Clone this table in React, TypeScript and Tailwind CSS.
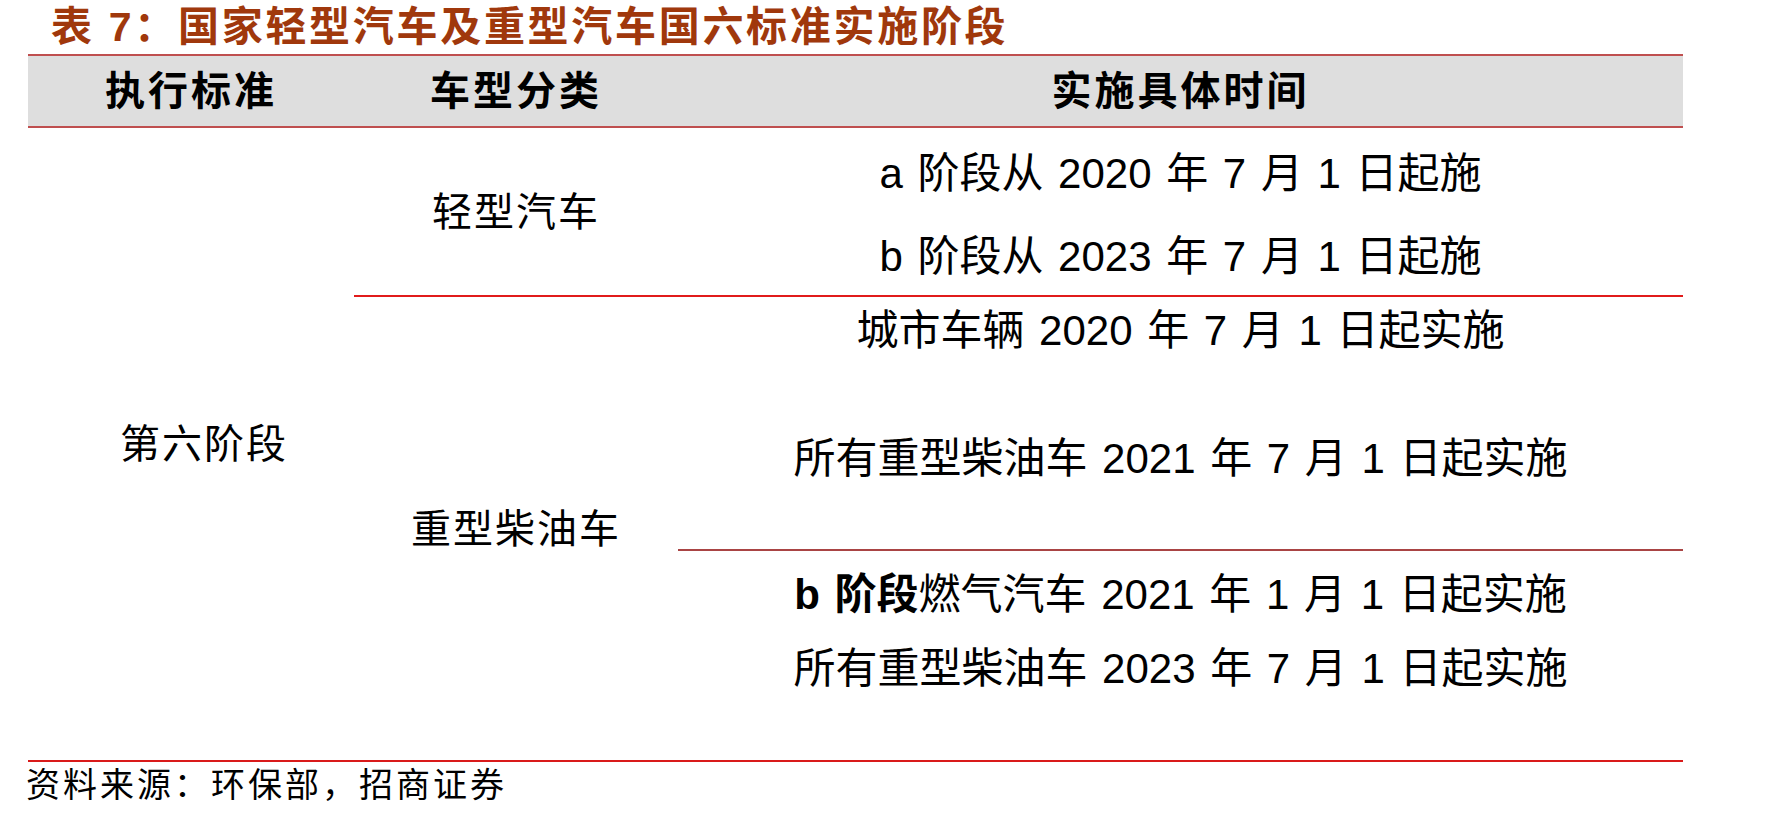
const rowsA = ["a 阶段从 2020 年 7 月 1 日起施", "b 阶段从 2023 年 7 月 1 日起施"];

export default function App() {
  return (
    <div className="w-[1777px] h-[821px] bg-white text-black font-['Liberation_Sans','Noto_Sans_CJK_SC',sans-serif]">
      <div className="h-[54px] pl-[51px] flex items-center text-[41px] leading-none font-bold tracking-[2.7px] text-[#a0380c]">
        表 7：国家轻型汽车及重型汽车国六标准实施阶段
      </div>

      <div className="ml-[28px] w-[1655px]">
        {/* header */}
        <div className="grid grid-cols-[326px_324px_1005px] h-[74px] items-center text-center bg-[#dedede] border-y-2 border-[#bf4f4f] text-[40px] font-bold tracking-[3px]">
          <div>执行标准</div>
          <div>车型分类</div>
          <div>实施具体时间</div>
        </div>

        {/* body */}
        <div className="grid grid-cols-[326px_324px_1005px] grid-rows-[169px_254px_209px] border-b-2 border-[#d91a1a] text-[40px] text-center">
          <div className="row-span-3 flex items-center justify-center pl-[26px] tracking-[2px]">第六阶段</div>

          <div className="flex items-center justify-center border-b-2 border-[#e11b1b] tracking-[2px]">轻型汽车</div>
          <div className="flex flex-col pt-[4px] text-[42px] leading-[83px] border-b-2 border-[#e11b1b] [word-spacing:3px]">
            {rowsA.map((t) => (
              <div key={t}>{t}</div>
            ))}
          </div>

          <div className="row-span-2 flex items-center justify-center tracking-[2px]">重型柴油车</div>
          <div className="flex flex-col pt-[10px] text-[42px] leading-[48px] border-b-2 border-[#a94444] [word-spacing:3px]">
            <div>城市车辆 2020 年 7 月 1 日起实施</div>
            <div className="mt-[80px]">所有重型柴油车 2021 年 7 月 1 日起实施</div>
          </div>

          <div className="flex flex-col pt-[7px] text-[42px] leading-[74px] [word-spacing:3px]">
            <div>
              <span className="font-bold">b 阶段</span>燃气汽车 2021 年 1 月 1 日起实施
            </div>
            <div>所有重型柴油车 2023 年 7 月 1 日起实施</div>
          </div>
        </div>
      </div>

      <div className="mt-[6px] pl-[26px] text-[34px] leading-[34px] tracking-[3px]">资料来源：环保部，招商证券</div>
    </div>
  );
}
